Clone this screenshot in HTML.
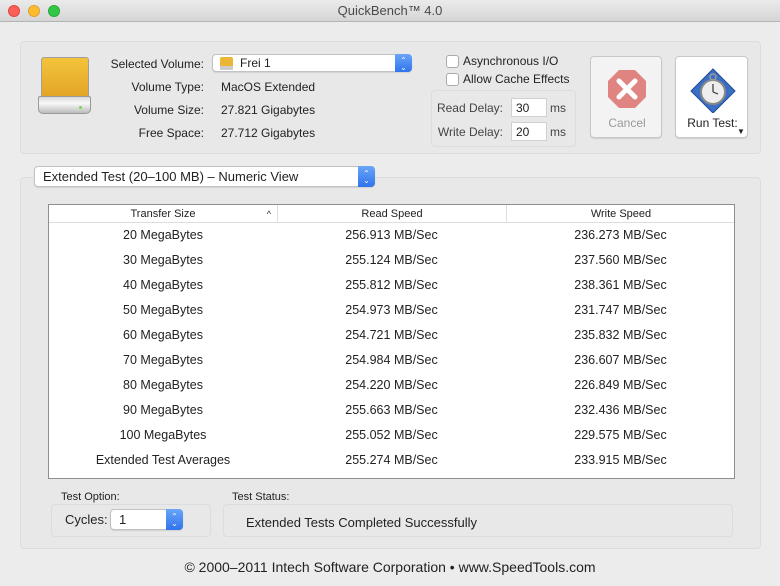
<!DOCTYPE html>
<html><head><style>
*{margin:0;padding:0;box-sizing:border-box}
body{width:780px;height:586px;background:#ececec;font-family:"Liberation Sans",sans-serif;font-size:12px;color:#222;position:relative;overflow:hidden}
.a{position:absolute}
.title{left:0;top:0;width:780px;height:22px;background:linear-gradient(#ebebeb,#d5d5d5);border-bottom:1px solid #b4b4b4;text-align:center;line-height:22px;font-size:13px;color:#4a4a4a}
.dot{top:5px;width:12px;height:12px;border-radius:50%}
.box{background:#e8e8e8;border:1px solid #dcdcdc;border-radius:4px}
.r{text-align:right}
.pop{background:#fff;border:1px solid #c2c2c2;border-radius:4px;box-shadow:0 1px 1px rgba(0,0,0,.1)}
.step{position:absolute;right:-1px;top:-1px;bottom:-1px;width:17px;background:linear-gradient(#6aa5f9,#2f74ec);border-radius:0 4px 4px 0;color:#fff;font-size:8px;text-align:center;line-height:7px;padding-top:3px}
.cb{width:13px;height:13px;border:1px solid #aaa;border-radius:3px;background:#fff}
.fld{background:#fff;border:1px solid #d0d0d0;height:19px;line-height:18px;padding-left:4px;font-size:12px}
.btn{background:#fff;border:1px solid #c8c8c8;border-radius:4px;box-shadow:0 1px 1px rgba(0,0,0,.1)}
.tbl{left:48px;top:204px;width:687px;height:275px;background:#fff;border:1px solid #8e8e8e}
.hd{top:0;height:18px;left:0;right:0;border-bottom:1px solid #ddd;line-height:18px;font-size:11px}
.row{left:0;right:0;height:25px;line-height:25px;font-size:12.5px}
.c1,.c2,.c3{position:absolute;text-align:center;top:0}
.c1{left:0;width:228px}.c2{left:228px;width:229px}.c3{left:457px;width:229px}
</style></head><body>
<div class="a title">QuickBench™ 4.0</div>
<div class="a dot" style="left:8px;background:#fc5f57;border:1px solid #df4744"></div>
<div class="a dot" style="left:28px;background:#fdbc2e;border:1px solid #dea235"></div>
<div class="a dot" style="left:48px;background:#33c748;border:1px solid #27aa35"></div>

<div class="a box" style="left:20px;top:41px;width:741px;height:113px"></div>
<div class="a" style="left:41px;top:57px;width:48px;height:40px;background:linear-gradient(#f3c43b,#e3a426);border:1px solid #a0a0a0;border-bottom:none;border-radius:3px 3px 0 0"></div>
<div class="a" style="left:38px;top:96px;width:53px;height:18px;background:linear-gradient(#d8d8d8,#f8f8f8 40%,#bcbcbc);border:1px solid #999;border-radius:2px 2px 5px 5px"></div>
<div class="a" style="left:79px;top:106px;width:3px;height:3px;background:#7bd35a;border-radius:50%"></div>

<div class="a r" style="left:90px;top:57px;width:114px">Selected Volume:</div>
<div class="a r" style="left:90px;top:80px;width:114px">Volume Type:</div>
<div class="a r" style="left:90px;top:103px;width:114px">Volume Size:</div>
<div class="a r" style="left:90px;top:126px;width:114px">Free Space:</div>
<div class="a pop" style="left:212px;top:54px;width:200px;height:18px"><div class="a" style="left:7px;top:2px;width:13px;height:9px;background:#eab634;border-radius:2px 2px 0 0"></div><div class="a" style="left:7px;top:11px;width:13px;height:4px;background:#ccc"></div><span class="a" style="left:27px;top:1px">Frei 1</span><div class="step">⌃<br>⌄</div></div>
<div class="a" style="left:221px;top:80px">MacOS Extended</div>
<div class="a" style="left:221px;top:103px">27.821 Gigabytes</div>
<div class="a" style="left:221px;top:126px">27.712 Gigabytes</div>

<div class="a cb" style="left:446px;top:55px"></div>
<div class="a" style="left:463px;top:54px">Asynchronous I/O</div>
<div class="a cb" style="left:446px;top:73px"></div>
<div class="a" style="left:463px;top:72px">Allow Cache Effects</div>
<div class="a box" style="left:431px;top:90px;width:145px;height:57px"></div>
<div class="a r" style="left:431px;top:101px;width:72px;color:#444">Read Delay:</div>
<div class="a r" style="left:431px;top:125px;width:72px;color:#444">Write Delay:</div>
<div class="a fld" style="left:511px;top:98px;width:36px">30</div>
<div class="a fld" style="left:511px;top:122px;width:36px">20</div>
<div class="a" style="left:550px;top:101px;color:#444">ms</div>
<div class="a" style="left:550px;top:125px;color:#444">ms</div>

<div class="a btn" style="left:590px;top:56px;width:72px;height:82px;background:#f3f3f3">
<svg class="a" style="left:16px;top:12px" width="40" height="40" viewBox="0 0 40 40"><polygon points="12,1 28,1 39,12 39,28 28,39 12,39 1,28 1,12" fill="#e08482"/><path d="M12 12L28 28M28 12L12 28" stroke="#fff" stroke-width="5" stroke-linecap="round"/></svg>
<div class="a" style="left:0;width:72px;top:59px;text-align:center;color:#999">Cancel</div></div>
<div class="a btn" style="left:675px;top:56px;width:73px;height:82px">
<svg class="a" style="left:13px;top:8px" width="48" height="48" viewBox="0 0 48 48"><polygon points="24,4 46,26 24,48 2,26" fill="#3a6fc4" stroke="#1e4b94"/><circle cx="24" cy="27" r="12" fill="#eee" stroke="#888" stroke-width="2"/><circle cx="24" cy="12" r="3" fill="none" stroke="#999" stroke-width="1.5"/><path d="M24 27L24 19M24 27L29 29" stroke="#333" stroke-width="1.2"/></svg>
<div class="a" style="left:0;width:73px;top:59px;text-align:center">Run Test:</div>
<div class="a" style="left:61px;top:70px;font-size:8px">▼</div></div>

<div class="a box" style="left:20px;top:177px;width:741px;height:372px"></div>
<div class="a pop" style="left:34px;top:166px;width:341px;height:21px;font-size:13px"><span class="a" style="left:8px;top:2px">Extended Test (20–100 MB) – Numeric View</span><div class="step" style="padding-top:4px">⌃<br>⌄</div></div>

<div class="a tbl">
<div class="a hd"><div class="c1">Transfer Size<span style="position:absolute;right:6px;font-size:9px">^</span></div><div class="c2" style="border-left:1px solid #ddd">Read Speed</div><div class="c3" style="border-left:1px solid #ddd">Write Speed</div></div>
<div class="a row" style="top:18px"><div class="c1">20 MegaBytes</div><div class="c2">256.913 MB/Sec</div><div class="c3">236.273 MB/Sec</div></div>
<div class="a row" style="top:43px"><div class="c1">30 MegaBytes</div><div class="c2">255.124 MB/Sec</div><div class="c3">237.560 MB/Sec</div></div>
<div class="a row" style="top:68px"><div class="c1">40 MegaBytes</div><div class="c2">255.812 MB/Sec</div><div class="c3">238.361 MB/Sec</div></div>
<div class="a row" style="top:93px"><div class="c1">50 MegaBytes</div><div class="c2">254.973 MB/Sec</div><div class="c3">231.747 MB/Sec</div></div>
<div class="a row" style="top:118px"><div class="c1">60 MegaBytes</div><div class="c2">254.721 MB/Sec</div><div class="c3">235.832 MB/Sec</div></div>
<div class="a row" style="top:143px"><div class="c1">70 MegaBytes</div><div class="c2">254.984 MB/Sec</div><div class="c3">236.607 MB/Sec</div></div>
<div class="a row" style="top:168px"><div class="c1">80 MegaBytes</div><div class="c2">254.220 MB/Sec</div><div class="c3">226.849 MB/Sec</div></div>
<div class="a row" style="top:193px"><div class="c1">90 MegaBytes</div><div class="c2">255.663 MB/Sec</div><div class="c3">232.436 MB/Sec</div></div>
<div class="a row" style="top:218px"><div class="c1">100 MegaBytes</div><div class="c2">255.052 MB/Sec</div><div class="c3">229.575 MB/Sec</div></div>
<div class="a row" style="top:243px"><div class="c1">Extended Test Averages</div><div class="c2">255.274 MB/Sec</div><div class="c3">233.915 MB/Sec</div></div>
</div>

<div class="a" style="left:61px;top:491px;font-size:11px">Test Option:</div>
<div class="a" style="left:232px;top:491px;font-size:11px">Test Status:</div>
<div class="a box" style="left:51px;top:504px;width:160px;height:33px"></div>
<div class="a box" style="left:223px;top:504px;width:510px;height:33px"></div>
<div class="a" style="left:65px;top:512px;font-size:13px">Cycles:</div>
<div class="a pop" style="left:110px;top:509px;width:73px;height:21px;font-size:13px"><span class="a" style="left:8px;top:2px">1</span><div class="step" style="padding-top:4px">⌃<br>⌄</div></div>
<div class="a" style="left:246px;top:515px;font-size:13px">Extended Tests Completed Successfully</div>

<div class="a" style="left:0;width:780px;top:559px;text-align:center;font-size:14px">© 2000–2011 Intech Software Corporation • www.SpeedTools.com</div>
</body></html>
